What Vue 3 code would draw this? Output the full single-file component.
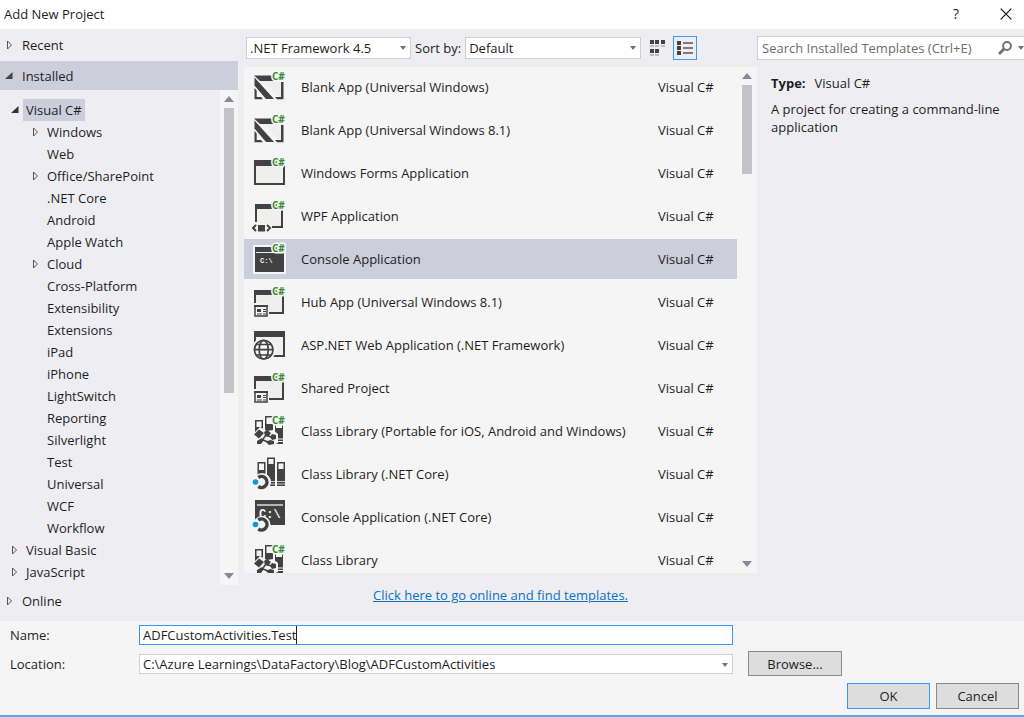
<script setup>
import { ref } from 'vue'

const branches = ref([
  { label: 'Visual C#', level: 0, arrow: 'open', selected: true },
  { label: 'Windows', level: 1, arrow: 'closed' },
  { label: 'Web', level: 1 },
  { label: 'Office/SharePoint', level: 1, arrow: 'closed' },
  { label: '.NET Core', level: 1 },
  { label: 'Android', level: 1 },
  { label: 'Apple Watch', level: 1 },
  { label: 'Cloud', level: 1, arrow: 'closed' },
  { label: 'Cross-Platform', level: 1 },
  { label: 'Extensibility', level: 1 },
  { label: 'Extensions', level: 1 },
  { label: 'iPad', level: 1 },
  { label: 'iPhone', level: 1 },
  { label: 'LightSwitch', level: 1 },
  { label: 'Reporting', level: 1 },
  { label: 'Silverlight', level: 1 },
  { label: 'Test', level: 1 },
  { label: 'Universal', level: 1 },
  { label: 'WCF', level: 1 },
  { label: 'Workflow', level: 1 },
  { label: 'Visual Basic', level: 0, arrow: 'closed' },
  { label: 'JavaScript', level: 0, arrow: 'closed' },
])

const templates = [
  { name: 'Blank App (Universal Windows)', icon: 'blank', badge: true },
  { name: 'Blank App (Universal Windows 8.1)', icon: 'blank', badge: true },
  { name: 'Windows Forms Application', icon: 'forms', badge: true },
  { name: 'WPF Application', icon: 'wpf', badge: true },
  { name: 'Console Application', icon: 'console', badge: true },
  { name: 'Hub App (Universal Windows 8.1)', icon: 'hub', badge: true },
  { name: 'ASP.NET Web Application (.NET Framework)', icon: 'web' },
  { name: 'Shared Project', icon: 'hub', badge: true },
  { name: 'Class Library (Portable for iOS, Android and Windows)', icon: 'library', badge: true },
  { name: 'Class Library (.NET Core)', icon: 'corelib' },
  { name: 'Console Application (.NET Core)', icon: 'coreconsole' },
  { name: 'Class Library', icon: 'library', badge: true },
]

const selected = ref(4)
const projectName = ref('ADFCustomActivities.Test')
</script>

<template>
  <div class="dialog">
    <header class="titlebar">
      <h1>Add New Project</h1>
      <button class="title-btn help" aria-label="Help">?</button>
      <button class="title-btn" aria-label="Close">
        <svg width="12" height="12" viewBox="0 0 12 12"><path d="M.7.7l10.6 10.6M11.300.7L.7 11.300" stroke="#111" stroke-width="1.2" /></svg>
      </button>
    </header>

    <div class="body">
      <nav class="side" aria-label="Template categories">
        <button class="group">
          <svg class="tri" width="8" height="10" viewBox="0 0 8 10"><path d="M1.500 1v8l4-4z" fill="none" stroke="#555" /></svg>
          Recent
        </button>
        <button class="group active">
          <svg class="tri" width="8" height="10" viewBox="0 0 8 10"><path d="M7.500 1v7H0z" fill="#444" /></svg>
          Installed
        </button>
        <div class="tree">
          <ul>
            <li v-for="b in branches" :key="b.label">
              <button class="branch" :class="{ child: b.level === 1 }">
                <svg class="tri" width="8" height="10" viewBox="0 0 8 10">
                  <path v-if="b.arrow === 'closed'" d="M1.500 1v8l4-4z" fill="none" stroke="#555" />
                  <path v-if="b.arrow === 'open'" d="M7.500 1v7H0z" fill="#333" />
                </svg>
                <span :class="{ chosen: b.selected }">{{ b.label }}</span>
              </button>
            </li>
          </ul>
          <div class="scroll side-scroll">
            <svg width="10" height="6" viewBox="0 0 10 6"><path d="M0 6l5-6 5 6z" fill="#868999" /></svg>
            <div class="track"><div class="thumb"></div></div>
            <svg width="10" height="6" viewBox="0 0 10 6"><path d="M0 0l5 6 5-6z" fill="#868999" /></svg>
          </div>
        </div>
        <button class="group online">
          <svg class="tri" width="8" height="10" viewBox="0 0 8 10"><path d="M1.500 1v8l4-4z" fill="none" stroke="#555" /></svg>
          Online
        </button>
      </nav>

      <main class="center">
        <div class="toolbar">
          <div class="select framework">
            <select aria-label="Framework"><option>.NET Framework 4.5</option></select>
            <svg width="6" height="4" viewBox="0 0 6 4"><path d="M0 0h6L3 4z" fill="#717171" /></svg>
          </div>
          <label for="sort">Sort by:</label>
          <div class="select sort">
            <select id="sort"><option>Default</option></select>
            <svg width="6" height="4" viewBox="0 0 6 4"><path d="M0 0h6L3 4z" fill="#717171" /></svg>
          </div>
          <button class="view" aria-label="Small icons">
            <svg width="16" height="16" viewBox="0 0 16 16">
              <path d="M1 0h4v4H1zM6 0h4v4H6zM12 0h4v4h-4zM1 9h4v4H1zM6 9h4v4H6z" fill="#424242" />
              <path d="M1 6h4M6 6h4M12 6h4M1 15h4M6 15h4" stroke="#8a8a8a" />
            </svg>
          </button>
          <button class="view on" aria-label="Medium icons">
            <svg width="16" height="16" viewBox="0 0 16 16">
              <path d="M0 1h4v4H0zM0 6h4v4H0zM0 11h4v4H0z" fill="#424242" />
              <path d="M6 3h10M6 8h10M6 13h10" stroke="#555" stroke-width="1.300" />
            </svg>
          </button>
        </div>

        <div class="list">
          <ul>
            <li v-for="(t, i) in templates" :key="t.name">
              <button class="row" :class="{ picked: selected === i }" @click="selected = i">
                <svg class="icon" width="40" height="38" viewBox="0 0 40 38">
                  <g v-if="t.icon === 'blank'">
                    <path d="M13 12h19v18h-3z" fill="#efefed" />
                    <path d="M4 7.500h20V13H10z" fill="#424242" />
                    <path d="M4.500 9.500L24 31h-8L4.500 17.500z" fill="#424242" />
                    <path d="M4.500 20l2.200 2.500V29H11l2 2.300H4.500zM31 14h2.500v17.300H27L25 29h6z" fill="#424242" />
                  </g>
                  <g v-else-if="t.icon === 'forms'">
                    <path d="M5 7h29v23H5z" fill="#efefed" stroke="#424242" stroke-width="2" />
                    <path d="M4 6h31v6H4z" fill="#424242" />
                  </g>
                  <g v-else-if="t.icon === 'wpf'">
                    <path d="M6 8h26v22H6z" fill="#efefed" />
                    <path d="M5 7h28v24H22v-2h9V12H7v13H5z" fill="#424242" />
                    <path d="M1 31l5-5h11l5 5-5 5H6z" fill="#f5f5f5" />
                    <path d="M6 28l-3 3 3 3M17 28l3 3-3 3" fill="none" stroke="#424242" stroke-width="2" />
                    <path d="M8 28h7v6.500H8z" fill="#424242" />
                  </g>
                  <g v-else-if="t.icon === 'console'">
                    <path d="M3 5h33v29H3z" fill="#f5f5f5" />
                    <path d="M5 7h29v25H5z" fill="#424242" />
                    <path d="M6 12.500h27" stroke="#eee" />
                    <text class="prompt" x="10" y="23">C:\</text>
                  </g>
                  <g v-else-if="t.icon === 'hub'">
                    <path d="M5 8h28v22H5z" fill="#efefed" />
                    <path d="M4 7h30v24H19v-2h13V12H6v8H4z" fill="#424242" />
                    <path d="M2 20h17v16H2z" fill="#f5f5f5" />
                    <path d="M5 23h12v10H5z" fill="#f5f5f5" stroke="#424242" stroke-width="1.500" />
                    <path d="M4 22h14v2H4zM7 26h4v3H7z" fill="#424242" />
                    <path d="M13 26.500h3M13 28.500h3M7 31h5M13 31h3" stroke="#424242" />
                  </g>
                  <g v-else-if="t.icon === 'web'">
                    <path d="M5 6h29v24H5z" fill="#efefed" stroke="#424242" stroke-width="2" />
                    <path d="M4 5h31v6H4z" fill="#424242" />
                    <circle cx="13.700" cy="23.700" r="12" fill="#f5f5f5" />
                    <g fill="none" stroke="#424242" stroke-width="1.700">
                      <circle cx="13.700" cy="23.700" r="9.300" />
                      <ellipse cx="13.700" cy="23.700" rx="4.500" ry="9.300" />
                      <path d="M4.500 23.700h18.400M6 18.500h15.500M6 29h15.500" />
                    </g>
                  </g>
                  <g v-else-if="t.icon === 'library'">
                    <path d="M5 8h8v22H5zM15 4h8v27h-8zM25 11h8v21h-8z" fill="#424242" />
                    <path d="M6.500 9.500h5V15h-5zM16.500 5.500H23V12h-6.500zM26 11h6v5h-6z" fill="#f5f5f5" />
                    <path d="M25 27h8M25 29.500h8" stroke="#f5f5f5" />
                    <path d="M2 23l8-8 7 4 6-1 5 4v9l-8 3-8-1-7-2-2-3z" fill="#f5f5f5" />
                    <path d="M4 22.500l5-5 5 3.500-5 5.500zM14 20l3-2 4 3-3 4-3-1zM22 22l4 1v4l-4 1-2-3zM7 29l5-3 2 2-3 4H7zM16 30l4-2 4 1v3l-5 1z" fill="#424242" />
                    <path d="M16 23l-3 4M18 24l4 1M13 28l5 2" stroke="#424242" stroke-width="1.500" />
                  </g>
                  <g v-else-if="t.icon === 'corelib'">
                    <path d="M7.500 7h8v24h-8zM17 2.500h8V31h-8zM27 7h8v24h-8z" fill="#424242" />
                    <path d="M9 8.500h5V15H9zM18.500 4h5v5h-5zM28.500 8.500h5V14h-5z" fill="#f5f5f5" />
                    <path d="M17 26.500h8M17 29h8M27 26.500h8M27 29h8" stroke="#c8c8c8" />
                    <circle cx="12" cy="27" r="9" fill="#f5f5f5" />
                    <path d="M8.300 22.500a5.500 5.500 0 1 1 0 9" fill="none" stroke="#424242" stroke-width="3.500" />
                    <circle cx="5.500" cy="27" r="2.800" fill="#0b98dc" />
                  </g>
                  <g v-else>
                    <path d="M5 2h30v25H5z" fill="#424242" />
                    <path d="M7 7h26" stroke="#f5f5f5" stroke-width="1.300" />
                    <text class="prompt big" x="9" y="20">C:\</text>
                    <circle cx="12" cy="26.500" r="8.500" fill="#f5f5f5" />
                    <path d="M8.300 22a5.500 5.500 0 1 1 0 9" fill="none" stroke="#424242" stroke-width="3.500" />
                    <circle cx="5.500" cy="26.500" r="2.800" fill="#0b98dc" />
                  </g>
                  <text v-if="t.badge" class="badge" x="22" y="12">C#</text>
                </svg>
                <span class="name">{{ t.name }}</span>
                <span class="lang">Visual C#</span>
              </button>
            </li>
          </ul>
          <div class="scroll list-scroll">
            <svg width="10" height="6" viewBox="0 0 10 6"><path d="M0 6l5-6 5 6z" fill="#868999" /></svg>
            <div class="track"><div class="thumb"></div></div>
            <svg width="10" height="6" viewBox="0 0 10 6"><path d="M0 0l5 6 5-6z" fill="#868999" /></svg>
          </div>
        </div>

        <p class="more"><a href="#">Click here to go online and find templates.</a></p>
      </main>

      <aside class="info">
        <div class="search">
          <input type="text" aria-label="Search" placeholder="Search Installed Templates (Ctrl+E)" />
          <button aria-label="Run search">
            <svg width="14" height="14" viewBox="0 0 14 14"><circle cx="9" cy="5" r="3.900" fill="none" stroke="#717171" stroke-width="2" /><path d="M6 8l-5 5" stroke="#717171" stroke-width="2.800" /></svg>
          </button>
          <button aria-label="Search options">
            <svg width="6" height="4" viewBox="0 0 6 4"><path d="M0 0h6L3 4z" fill="#717171" /></svg>
          </button>
        </div>
        <div class="details">
          <p><strong>Type:</strong><span>Visual C#</span></p>
          <p>A project for creating a command-line application</p>
        </div>
      </aside>
    </div>

    <footer class="footer">
      <div class="fields">
        <label for="name">Name:</label>
        <div class="box">
          <input id="name" v-model="projectName" type="text" /><span class="caret"></span>
        </div>
        <label class="second" for="location">Location:</label>
        <div class="select">
          <select id="location"><option>C:\Azure Learnings\DataFactory\Blog\ADFCustomActivities</option></select>
          <svg width="6" height="4" viewBox="0 0 6 4"><path d="M0 0h6L3 4z" fill="#717171" /></svg>
        </div>
        <button class="push browse">Browse...</button>
      </div>
      <div class="actions">
        <button class="push default">OK</button>
        <button class="push">Cancel</button>
      </div>
    </footer>
  </div>
</template>

<style>
body {
  margin: 0;
}
</style>

<style scoped>
* {
  box-sizing: border-box;
}
.dialog {
  display: flex;
  flex-direction: column;
  height: 100vh;
  overflow: hidden;
  background: #eeeef2;
  border-bottom: 2px solid #5aa9e2;
  color: #1e1e1e;
  font: 13px/18px "Open Sans", "Noto Sans", sans-serif;
}
button,
input,
select {
  margin: 0;
  padding: 0;
  border: 0;
  border-radius: 0;
  outline: 0;
  background: none;
  color: inherit;
  font: inherit;
}
ul,
p,
h1 {
  margin: 0;
  padding: 0;
  list-style: none;
}
svg {
  display: block;
  flex: none;
}
.titlebar {
  display: flex;
  align-items: center;
  height: 29px;
  padding: 0 0 2px 4px;
  background: #fff;
}
h1 {
  flex: 1;
  font-size: 13px;
  font-weight: 400;
}
.title-btn {
  display: grid;
  place-items: center;
  width: 36px;
  height: 26px;
}
.title-btn.help {
  width: 64px;
  font-size: 14px;
}
.body {
  display: flex;
  flex: 1;
  min-height: 0;
}
.side {
  display: flex;
  flex-direction: column;
  width: 238px;
}
.group {
  display: flex;
  align-items: center;
  gap: 8px;
  height: 32px;
  padding-left: 6px;
  text-align: left;
}
.group.active {
  height: 29px;
  padding-left: 5px;
  gap: 9px;
  background: #cccedb;
}
.group.online {
  height: 36px;
  padding-bottom: 4px;
}
.tree {
  display: flex;
  flex: 1;
  min-height: 0;
}
.tree ul {
  flex: 1;
  padding-top: 9px;
}
.branch {
  display: flex;
  align-items: center;
  gap: 2px;
  width: 100%;
  height: 22px;
  padding-left: 11px;
}
.branch.child {
  padding-left: 32px;
}
.branch span {
  padding: 2px 3px;
  margin-left: 2px;
}
.branch .chosen {
  background: #cccedb;
}
.scroll {
  display: flex;
  flex-direction: column;
  align-items: center;
  gap: 6px;
  width: 18px;
  padding: 6px 0;
  background: #f5f5f5;
}
.track {
  flex: 1;
  width: 10px;
}
.thumb {
  height: 62%;
  background: #c2c3c9;
}
.list-scroll .thumb {
  height: 19%;
}
.center {
  display: flex;
  flex: 1;
  flex-direction: column;
  min-width: 0;
  padding: 7px 0 0 6px;
}
.toolbar {
  display: flex;
  align-items: center;
  height: 24px;
  margin-bottom: 7px;
  padding-left: 2px;
}
.select {
  position: relative;
  display: flex;
  height: 22px;
  border: 1px solid #cccedb;
  background: #fff;
}
.select select {
  width: 100%;
  padding-left: 3px;
  appearance: none;
}
.select svg {
  position: absolute;
  top: 8px;
  right: 4px;
  pointer-events: none;
}
.framework {
  width: 165px;
}
.toolbar label {
  padding: 0 4px;
  white-space: nowrap;
}
.sort {
  width: 176px;
}
.view {
  display: grid;
  place-items: center;
  width: 24px;
  height: 24px;
  margin-left: 4px;
}
.view.on {
  border: 1px solid #3399ff;
}
.list {
  display: flex;
  flex: 1;
  min-height: 0;
  overflow: hidden;
  background: #f5f5f5;
}
.list ul {
  flex: 1;
  height: 0;
}
.row {
  display: flex;
  align-items: center;
  width: 100%;
  height: 40px;
  margin-bottom: 3px;
  padding-left: 6px;
  text-align: left;
}
.row.picked {
  background: #cccedb;
}
.name {
  flex: 1;
  padding-left: 11px;
}
.lang {
  width: 79px;
}
.list-scroll {
  width: 20px;
}
.badge {
  fill: #388a34;
  stroke: #f5f5f5;
  stroke-width: 3px;
  paint-order: stroke;
  font: bold 10px "Open Sans", sans-serif;
}
.prompt {
  fill: #f5f5f5;
  font: bold 7px "Liberation Mono", monospace;
}
.prompt.big {
  font-size: 12px;
}
.more {
  height: 48px;
  padding-top: 13px;
  text-align: center;
}
a {
  color: #0e70c0;
}
.info {
  width: 267px;
  padding-top: 7px;
}
.search {
  display: flex;
  align-items: center;
  gap: 6px;
  height: 24px;
  border: 1px solid #cccedb;
  border-right: 0;
  background: #fff;
}
.search input {
  flex: 1;
  min-width: 0;
  padding-left: 4px;
}
.search input::placeholder {
  color: #6d6d6d;
  opacity: 1;
}
.details {
  display: grid;
  gap: 8px;
  padding: 14px;
}
.details strong {
  margin-right: 9px;
}
.footer {
  padding: 4px 5px 6px 10px;
  background: #f5f5f5;
}
.fields {
  display: grid;
  grid-template-columns: 129px 1fr 94px;
  align-items: center;
  grid-template-rows: 20px 25px;
  row-gap: 6px;
  padding-right: 177px;
}
.box {
  display: flex;
  height: 20px;
  border: 1px solid #3399ff;
  background: #fff;
}
.box input {
  field-sizing: content;
  padding-left: 3px;
}
.caret {
  width: 1px;
  background: #222;
}
.fields .box {
  margin-right: 15px;
}
.fields .second {
  grid-column: 1;
}
.fields .select {
  height: 20px;
  margin-right: 15px;
}
.push {
  width: 83px;
  height: 26px;
  border: 1px solid #8a8a8a;
  background: #ddd;
}
.push.browse {
  width: 94px;
  height: 25px;
}
.push.default {
  border-color: #3399ff;
}
.actions {
  display: flex;
  justify-content: flex-end;
  gap: 6px;
  margin-top: 7px;
}
</style>
